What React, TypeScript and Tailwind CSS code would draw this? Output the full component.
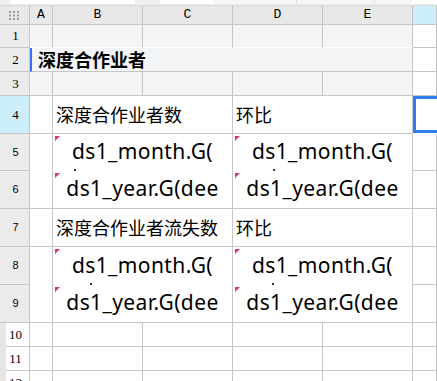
const line = "border-[#c6c6c6]";
const cjk = { fontFamily: '"Noto Sans CJK SC", "Noto Sans", sans-serif' };

function Mark() {
  return (
    <svg className="absolute left-[2px] top-[2px]" width="5" height="5" viewBox="0 0 5 5">
      <polygon points="0,0 5,0 0,5" fill="#d83a5e" />
      <rect x="0" y="3" width="1" height="2" fill="#888" />
    </svg>
  );
}

function ColHead({ label, blue }: { label?: string; blue?: boolean }) {
  return (
    <div
      className={`flex items-center justify-center border-r border-b ${line} ${
        blue ? "bg-[#cdeefb]" : "bg-[#e8e8e8]"
      } text-[13px] text-black font-['Liberation_Mono',monospace]`}
    >
      {label}
    </div>
  );
}

function RowHead({ n, tone }: { n: number; tone: "gray" | "blue" | "white" | "sans" }) {
  const bg =
    tone === "blue" ? "bg-[#cdeefb]" : tone === "white" ? "bg-white" : "bg-[#ebebeb]";
  const font =
    tone === "sans"
      ? "text-[11px] font-['Liberation_Sans',sans-serif]"
      : "text-[13px] font-['Liberation_Serif',serif]";
  return (
    <div className={`relative flex items-center justify-center border-r border-b ${line} ${bg} ${font} text-black`}>
      {tone === "white" && <div className="absolute left-0 top-0 bottom-[-1px] w-[6px] bg-[#e6e6e6]" />}
      <span className="relative pl-[2px]">{n}</span>
    </div>
  );
}

// formula cell; the wrapped second line peeks out as a tiny tick at the bottom
function Expr({ text, noBottom, tick }: { text: string; noBottom?: boolean; tick?: number }) {
  return (
    <div
      className={`relative col-span-2 flex items-center justify-center overflow-hidden whitespace-nowrap border-r ${
        noBottom ? "" : "border-b"
      } ${line} bg-white text-[21px] tracking-[0.4px] text-black font-['Noto_Sans',sans-serif]`}
    >
      <Mark />
      <span className="pb-[1px]">{text}</span>
      {tick !== undefined && (
        <div className="absolute bottom-0 w-[2px] h-[2px] bg-[#333]" style={{ left: tick }} />
      )}
    </div>
  );
}

function Block({ title }: { title: string }) {
  return (
    <>
      <div className={`col-span-2 flex items-center px-[3px] border-r border-b ${line} bg-white text-[18px] text-black whitespace-nowrap`} style={cjk}>
        {title}
      </div>
      <div className={`col-span-2 flex items-center px-[3px] border-r border-b ${line} bg-white text-[18px] text-black`} style={cjk}>
        环比
      </div>
    </>
  );
}

export default function App() {
  const grey = `border-r border-b ${line} bg-[#f4f5f7]`;
  const white = `border-r border-b ${line} bg-white`;

  return (
    <div className="w-[437px] h-[381px] overflow-hidden bg-white">
      {/* toolbar strip */}
      <div className="h-[6px] flex bg-[#efefef] border-b border-[#d8d8d8]">
        <div className="ml-[10px] w-[125px] h-[4px] bg-white" />
        <div className="ml-[25px] w-[53px] h-[4px] bg-white" />
        <div className="w-[84px] h-[4px] bg-[#f6f6f6] border-r border-[#e2e2e2]" />
        <div className="w-[78px] h-[4px] bg-[#f6f6f6] border-r border-[#e2e2e2]" />
        <div className="w-[38px] h-[4px] bg-[#f6f6f6]" />
        <div className="flex-1 h-[4px] bg-white" />
      </div>

      <div className="grid grid-cols-[30px_23px_90px_90px_90px_90px_1fr] grid-rows-[19px_23px_24px_24px_38px_37px_38px_38px_38px_38px_24px_24px_24px]">
        {/* header row */}
        <div className={`flex items-center justify-center border-r border-b ${line} bg-[#e8e8e8]`}>
          <svg width="11" height="9" viewBox="0 0 11 9">
            {[0, 4, 8].map((x) =>
              [0, 3.5, 7].map((y) => <rect key={`${x}-${y}`} x={x} y={y} width="2" height="2" fill="#9a9a9a" />)
            )}
          </svg>
        </div>
        <ColHead label="A" />
        <ColHead label="B" />
        <ColHead label="C" />
        <ColHead label="D" />
        <ColHead label="E" />
        <ColHead blue />

        {/* row 1 */}
        <RowHead n={1} tone="gray" />
        <div className={`${grey} border-b-white`} />
        <div className={`${grey} border-b-white`} />
        <div className={`${grey} border-b-white`} />
        <div className={`${grey} border-b-white`} />
        <div className={`${grey} border-b-white`} />
        <div className={white} />

        {/* row 2 */}
        <RowHead n={2} tone="gray" />
        <div className={`col-span-5 flex items-center border-b border-r ${line} bg-[#f4f5f7] border-l-[2px] border-l-[#3a6df0] pl-[6px] text-[18px] font-bold text-black`} style={cjk}>
          深度合作业者
        </div>
        <div className={white} />

        {/* row 3 */}
        <RowHead n={3} tone="gray" />
        <div className={grey} />
        <div className={grey} />
        <div className={grey} />
        <div className={grey} />
        <div className={grey} />
        <div className={white} />

        {/* row 4 */}
        <RowHead n={4} tone="blue" />
        <div className={white} />
        <Block title="深度合作业者数" />
        <div className="relative bg-white">
          <div className="absolute left-0 top-0 w-[40px] h-[37px] border-[3px] border-[#2f80ed]" />
        </div>

        {/* row 5 */}
        <RowHead n={5} tone="sans" />
        <div className={`border-r ${line} bg-white`} />
        <Expr text="ds1_month.G(" noBottom tick={21} />
        <Expr text="ds1_month.G(" noBottom tick={40} />
        <div className={white} />

        {/* row 6 */}
        <RowHead n={6} tone="sans" />
        <div className={white} />
        <Expr text="ds1_year.G(dee" />
        <Expr text="ds1_year.G(dee" />
        <div className={white} />

        {/* row 7 */}
        <RowHead n={7} tone="sans" />
        <div className={white} />
        <Block title="深度合作业者流失数" />
        <div className={white} />

        {/* row 8 */}
        <RowHead n={8} tone="sans" />
        <div className={`border-r ${line} bg-white`} />
        <Expr text="ds1_month.G(" noBottom tick={37} />
        <Expr text="ds1_month.G(" noBottom tick={39} />
        <div className={white} />

        {/* row 9 */}
        <RowHead n={9} tone="sans" />
        <div className={white} />
        <Expr text="ds1_year.G(dee" />
        <Expr text="ds1_year.G(dee" />
        <div className={white} />

        {/* rows 10-12 */}
        {[10, 11, 12].map((n) => (
          <div key={n} className="contents">
            <RowHead n={n} tone="white" />
            <div className={white} />
            <div className={white} />
            <div className={white} />
            <div className={white} />
            <div className={white} />
            <div className={white} />
          </div>
        ))}
      </div>
    </div>
  );
}
